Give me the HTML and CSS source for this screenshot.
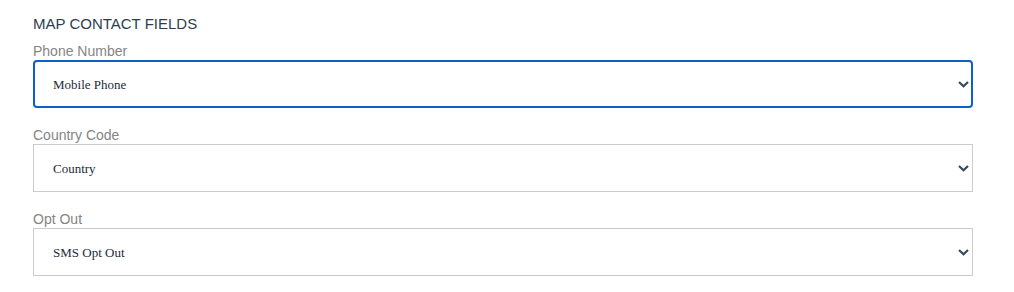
FILE: index.html
```html
<!DOCTYPE html>
<html lang="en">
<head>
    <meta charset="UTF-8">
    <meta name="viewport" content="width=device-width, initial-scale=1.0">
    <title>Map Contact Fields</title>
    <link rel="stylesheet" href="styles.css">
</head>
<body>
    <div class="container">
        <h2 class="section-title">MAP CONTACT FIELDS</h2>

        <div class="field">
            <label class="field-label">Phone Number</label>
            <div class="select-wrap">
                <select class="select select-focused">
                    <option>Mobile Phone</option>
                </select>
                <svg class="chevron" width="11" height="7" viewBox="0 0 11 7">
                    <polyline points="1,1 5.5,5.2 10,1" fill="none" stroke="#34495e" stroke-width="2.2"/>
                </svg>
            </div>
        </div>

        <div class="field">
            <label class="field-label">Country Code</label>
            <div class="select-wrap">
                <select class="select">
                    <option>Country</option>
                </select>
                <svg class="chevron" width="11" height="7" viewBox="0 0 11 7">
                    <polyline points="1,1 5.5,5.2 10,1" fill="none" stroke="#34495e" stroke-width="2.2"/>
                </svg>
            </div>
        </div>

        <div class="field">
            <label class="field-label">Opt Out</label>
            <div class="select-wrap">
                <select class="select">
                    <option>SMS Opt Out</option>
                </select>
                <svg class="chevron" width="11" height="7" viewBox="0 0 11 7">
                    <polyline points="1,1 5.5,5.2 10,1" fill="none" stroke="#34495e" stroke-width="2.2"/>
                </svg>
            </div>
        </div>
    </div>
</body>
</html>
```

FILE: styles.css
```css
* {
    margin: 0;
    padding: 0;
    box-sizing: border-box;
}

body {
    background: #fff;
    font-family: 'Liberation Sans', Arial, sans-serif;
}

.container {
    width: 940px;
    margin-left: 33px;
    padding-top: 15px;
}

.section-title {
    font-size: 15px;
    line-height: 18px;
    font-weight: normal;
    color: #2c3e50;
    margin-bottom: 10px;
}

.field {
    margin-bottom: 19px;
}

.field-label {
    display: block;
    font-size: 14px;
    line-height: 16px;
    color: #858585;
    margin-bottom: 1px;
}

.select-wrap {
    position: relative;
}

.select {
    display: block;
    width: 100%;
    height: 48px;
    padding: 0 19px;
    border: 1px solid #cbcbcb;
    border-radius: 0;
    background: #fff;
    font-family: 'Liberation Serif', 'Times New Roman', serif;
    font-size: 13px;
    color: #1d2b3a;
    appearance: none;
    -webkit-appearance: none;
    outline: none;
}

.select-focused {
    border: 2px solid #0b60c6;
    border-radius: 4px;
    padding: 0 18px;
}

.chevron {
    position: absolute;
    right: 4px;
    top: 21px;
    pointer-events: none;
}
```
